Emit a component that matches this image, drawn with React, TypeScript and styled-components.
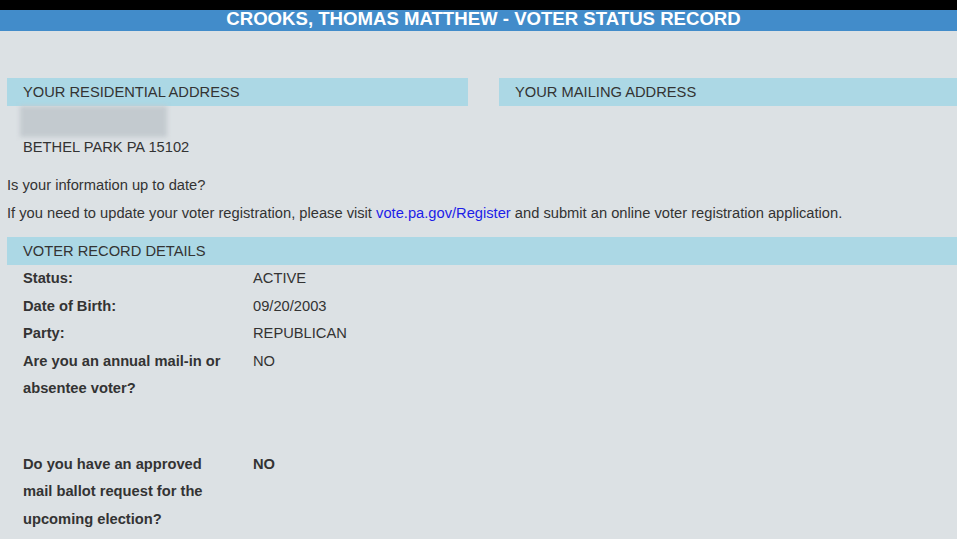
import React from "react";
import styled, { createGlobalStyle } from "styled-components";

const GlobalStyle = createGlobalStyle`
  body {
    margin: 0;
    background-color: #dce1e4;
    font-family: "Liberation Sans", Arial, sans-serif;
    font-size: 14.7px;
    color: #333;
  }
`;

const Page = styled.div`
  min-height: 539px;
  background-color: #dce1e4;
  overflow: hidden;
`;

const TopStrip = styled.div`
  height: 10px;
  background-color: #000;
`;

const TitleBar = styled.div`
  height: 21px;
  background-color: #428cca;
  color: #fff;
  font-size: 18.6px;
  font-weight: bold;
  line-height: 18px;
  text-align: center;
  padding-left: 10px;
`;

const Content = styled.div`
  padding-left: 7px;
`;

const AddressGrid = styled.div`
  display: grid;
  grid-template-columns: 461px 1fr;
  column-gap: 31px;
  margin-top: 47px;
`;

const SectionHeader = styled.div`
  height: 28px;
  line-height: 28px;
  padding-left: 16px;
  background-color: #acd8e5;
  text-transform: uppercase;
`;

const Redacted = styled.div`
  width: 147px;
  height: 31px;
  margin-left: 13px;
  background-color: #c3cacf;
  filter: blur(2px);
`;

const AddressLine = styled.div`
  padding-left: 16px;
  line-height: 20px;
`;

const InfoText = styled.p`
  margin: 0;
  line-height: 28px;
`;

const Notes = styled.div`
  margin-top: 14px;
  margin-bottom: 10px;
`;

const Link = styled.a`
  color: #1d1de8;
  text-decoration: none;
`;

const DetailRow = styled.div<{ $spaceAfter?: number }>`
  display: grid;
  grid-template-columns: 230px 1fr;
  padding-left: 16px;
  line-height: 27.5px;
  margin-bottom: ${(p) => p.$spaceAfter ?? 0}px;
`;

const Label = styled.div`
  font-weight: bold;
  padding-right: 27px;
`;

const Value = styled.div<{ $strong?: boolean }>`
  font-weight: ${(p) => (p.$strong ? "bold" : "normal")};
`;

const details = [
  { label: "Status:", value: "ACTIVE" },
  { label: "Date of Birth:", value: "09/20/2003" },
  { label: "Party:", value: "REPUBLICAN" },
  { label: "Are you an annual mail-in or absentee voter?", value: "NO", space: 48 },
  {
    label: "Do you have an approved mail ballot request for the upcoming election?",
    value: "NO",
    strong: true,
  },
];

export default function App() {
  return (
    <Page>
      <GlobalStyle />
      <TopStrip />
      <TitleBar>CROOKS, THOMAS MATTHEW - VOTER STATUS RECORD</TitleBar>
      <Content>
        <AddressGrid>
          <div>
            <SectionHeader>Your Residential Address</SectionHeader>
            <Redacted />
            <AddressLine>BETHEL PARK PA 15102</AddressLine>
          </div>
          <div>
            <SectionHeader>Your Mailing Address</SectionHeader>
          </div>
        </AddressGrid>
        <Notes>
          <InfoText>Is your information up to date?</InfoText>
          <InfoText>
            If you need to update your voter registration, please visit{" "}
            <Link href="#">vote.pa.gov/Register</Link> and submit an online
            voter registration application.
          </InfoText>
        </Notes>
        <SectionHeader>Voter Record Details</SectionHeader>
        {details.map((d) => (
          <DetailRow key={d.label} $spaceAfter={d.space}>
            <Label>{d.label}</Label>
            <Value $strong={d.strong}>{d.value}</Value>
          </DetailRow>
        ))}
      </Content>
    </Page>
  );
}
